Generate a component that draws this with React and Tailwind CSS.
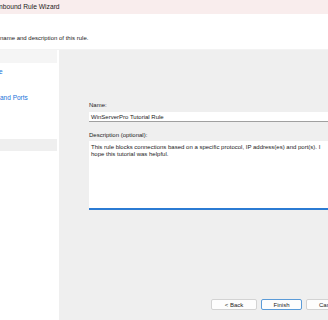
export default function App() {
  const font = { fontFamily: '"Liberation Sans", Arial, sans-serif' };
  return (
    <div className="w-[328px] h-[320px] overflow-hidden bg-white flex flex-col text-[#1b1b1b]" style={font}>
      <div className="h-[14px] bg-[#f9eded] flex items-center text-[6.7px] leading-none shrink-0">
        <span className="-ml-[1px]">nbound Rule Wizard</span>
      </div>
      <div className="h-[35px] shrink-0 bg-white relative">
        <div className="absolute left-0 top-[21px] text-[6px] leading-none">name and description of this rule.</div>
      </div>
      <div className="h-[1px] bg-[#f3f3f3] shrink-0" />
      <div className="flex flex-1 min-h-0">
        <div className="w-[57px] shrink-0 flex flex-col bg-white">
          <div className="h-[13px] bg-[#f5f5f5]" />
          <div className="h-[6px]" />
          <div className="text-[6.5px] leading-none text-[#1a73d9] -ml-[1px]">e</div>
          <div className="h-[19px]" />
          <div className="text-[6.5px] leading-none text-[#1a73d9]">and Ports</div>
          <div className="h-[38px]" />
          <div className="h-[12px] bg-[#efefef]" />
          <div className="flex-1 bg-white" />
        </div>
        <div className="w-[2px] shrink-0 bg-white" />
        <div className="flex-1 min-w-0 bg-[#efefef] flex flex-col pl-[30px]">
          <div className="h-[52px] shrink-0" />
          <div className="text-[6px] leading-none">Name:</div>
          <div className="mt-[4px] w-[260px] h-[10px] shrink-0 bg-white border-b border-[#a0a0a0] flex items-center pl-[2px] text-[6px] leading-none whitespace-nowrap">
            WinServerPro Tutorial Rule
          </div>
          <div className="mt-[10px] text-[6px] leading-none">Description (optional):</div>
          <div className="mt-[3px] w-[260px] h-[69px] shrink-0 bg-white border-b-2 border-[#2b7bd3] pl-[2px] pt-[3px] text-[6px] leading-[7px] whitespace-nowrap">
            This rule blocks connections based on a specific protocol, IP address(es) and port(s). I
            <br />
            hope this tutorial was helpful.
          </div>
          <div className="flex-1" />
          <div className="flex gap-[4px] pl-[122px] mb-[10px]">
            <button className="w-[46px] h-[11px] bg-[#fdfdfd] border border-[#d3d3d3] rounded-[2px] text-[6px] leading-none shrink-0">&lt; Back</button>
            <button className="w-[41px] h-[11px] bg-[#fdfdfd] border border-[#5b9bd8] rounded-[2px] text-[6px] leading-none shrink-0">Finish</button>
            <button className="w-[46px] h-[11px] bg-[#fdfdfd] border border-[#d3d3d3] rounded-[2px] text-[6px] leading-none shrink-0 text-left pl-[12px]">Cancel</button>
          </div>
        </div>
      </div>
    </div>
  );
}
